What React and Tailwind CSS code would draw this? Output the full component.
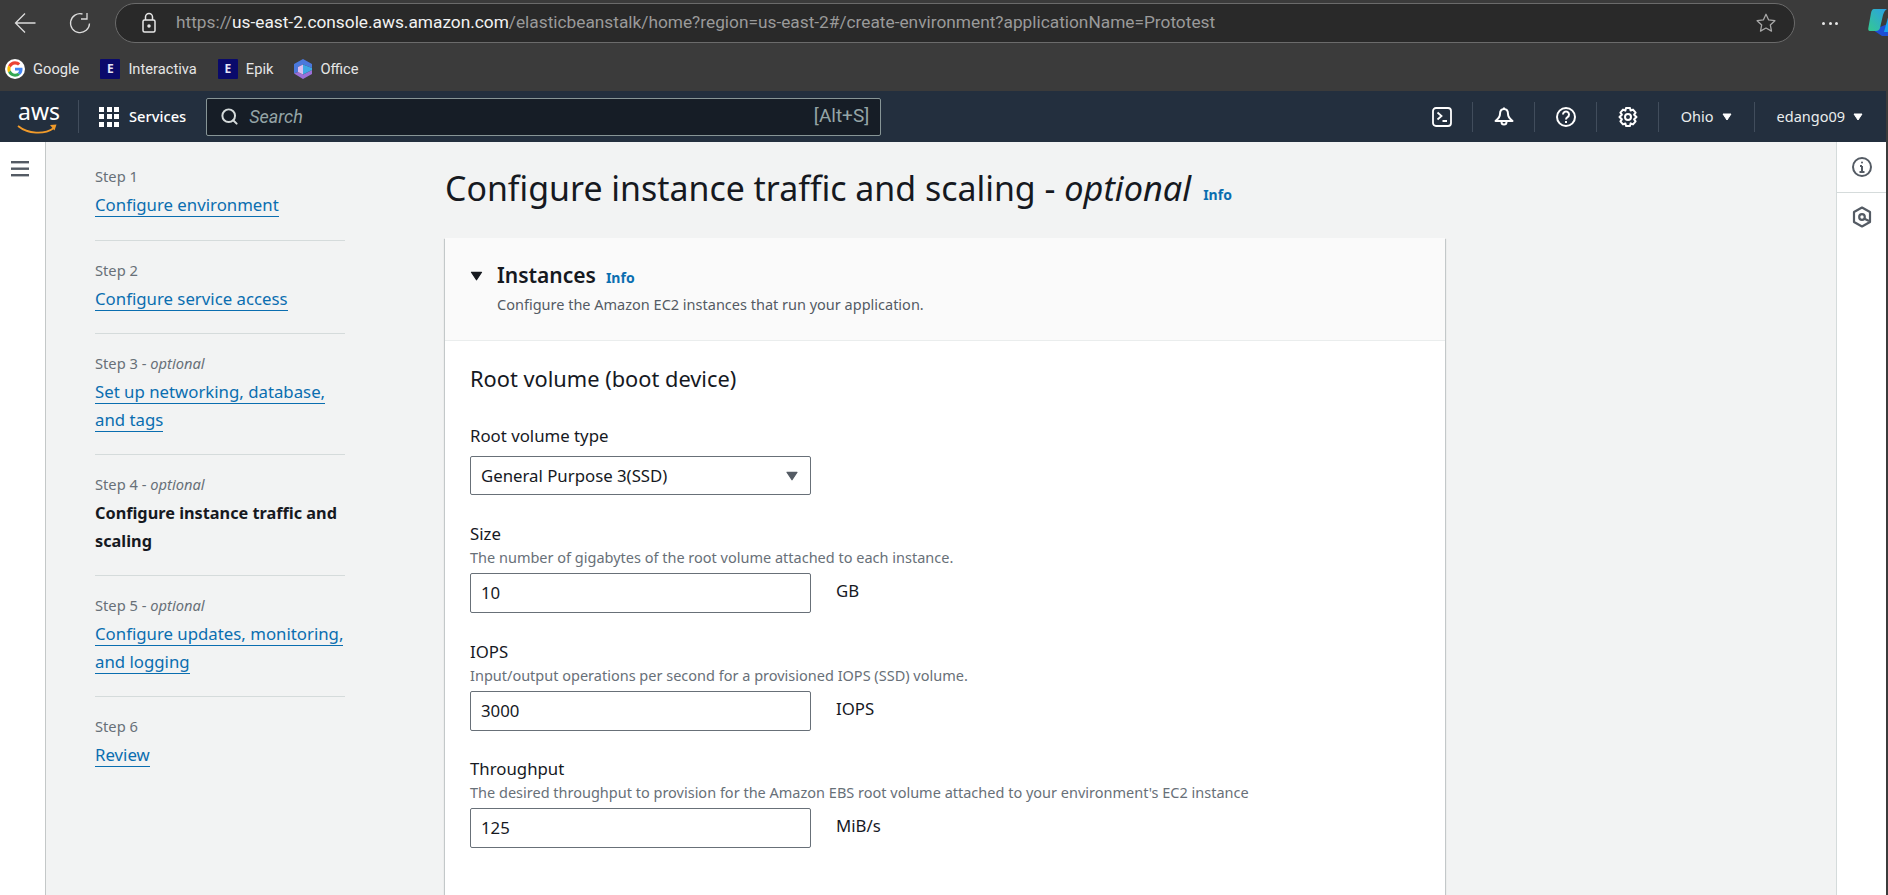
import { Search } from 'lucide-react'

const SANS = 'font-["Noto_Sans",sans-serif]'

const steps = [
  { label: 'Step 1', links: ['Configure environment'] },
  { label: 'Step 2', links: ['Configure service access'] },
  { label: 'Step 3', optional: true, links: ['Set up networking, database,', 'and tags'] },
  { label: 'Step 4', optional: true, current: true, links: ['Configure instance traffic and', 'scaling'] },
  { label: 'Step 5', optional: true, links: ['Configure updates, monitoring,', 'and logging'] },
  { label: 'Step 6', links: ['Review'] },
]

const fields = [
  { label: 'Size', desc: 'The number of gigabytes of the root volume attached to each instance.', value: '10', unit: 'GB' },
  { label: 'IOPS', desc: 'Input/output operations per second for a provisioned IOPS (SSD) volume.', value: '3000', unit: 'IOPS' },
  { label: 'Throughput', desc: "The desired throughput to provision for the Amazon EBS root volume attached to your environment's EC2 instance", value: '125', unit: 'MiB/s' },
]

function Bookmark({ icon, children }) {
  return (
    <div className="flex items-center gap-[8px]">
      {icon}
      <span className="font-['Roboto',sans-serif] text-[14.700px] text-[#e6e6e6]">{children}</span>
    </div>
  )
}

function EpikIcon() {
  return (
    <span className="flex h-5 w-5 items-center justify-center rounded-[1px] bg-[#0a0a6b] text-[12px] leading-none font-bold text-[#e4e4f6]">E</span>
  )
}

function GoogleIcon() {
  return (
    <svg width="20" height="20" viewBox="0 0 48 48">
      <circle cx="24" cy="24" r="24" fill="#fff" />
      <path fill="#ea4335" d="M24 13c2.900 0 5.400 1 7.300 2.800l5.300-5.300C33.400 7.500 29 5.600 24 5.600c-7.200 0-13.400 4.100-16.400 10.100l6.200 4.800C15.300 16.200 19.300 13 24 13z" />
      <path fill="#4285f4" d="M42 24.500c0-1.300-.1-2.500-.3-3.700H24v7h10.100c-.4 2.300-1.800 4.300-3.800 5.600l6 4.600c3.500-3.200 5.700-8 5.700-13.500z" />
      <path fill="#fbbc05" d="M13.800 27.500c-.4-1.100-.6-2.300-.6-3.500s.2-2.400.6-3.500l-6.200-4.800C6.300 18.200 5.600 21 5.600 24s.7 5.800 2 8.300l6.200-4.800z" />
      <path fill="#34a853" d="M24 42.400c5 0 9.200-1.600 12.300-4.500l-6-4.600c-1.700 1.100-3.800 1.800-6.300 1.800-4.700 0-8.700-3.200-10.200-7.500l-6.200 4.800c3 6 9.200 10 16.400 10z" />
    </svg>
  )
}

function OfficeIcon() {
  return (
    <svg width="18" height="20" viewBox="0 0 18 20">
      <path fill="#4a78dc" d="M9 0l9 5v4L9 5.500 4 8v5l-4 1.500V5z" />
      <path fill="#9a6fd8" d="M0 14.500L4 13l5 2.500 9-4.500v4l-9 5z" />
      <path fill="#d9bdf0" d="M4 8l5-2.500v10L4 13z" />
      <path fill="#3fa7e4" d="M9 5.500l9 3.500v2l-9 4.500z" />
    </svg>
  )
}

function NavSep({ className }) {
  return <span className={`h-[30px] w-px bg-[#414d5c] ${className}`} />
}

function Caret({ className }) {
  return (
    <svg className={className} width="10" height="8" viewBox="0 0 10 8">
      <path fill="currentColor" stroke="currentColor" strokeLinejoin="round" d="M1 1h8L5 7z" />
    </svg>
  )
}

export default function App() {
  return (
    <div className={`flex h-[895px] w-[1888px] flex-col overflow-hidden bg-[#3b3b3b] ${SANS}`}>
      {/* browser toolbar */}
      <div className="flex h-[46px] shrink-0 items-center pl-[14px]">
        <svg className="shrink-0" width="22" height="22" viewBox="0 0 22 22" fill="none" stroke="#dcdcdc" strokeWidth="1.300">
          <path d="M21.500 11H2M11 1.500L1.500 11l9.500 9.500" />
        </svg>
        <svg className="ml-[33px] shrink-0" width="22" height="22" viewBox="0 0 22 22" fill="none" stroke="#dcdcdc" strokeWidth="1.300">
          <path d="M13.500 2A9.500 9.500 0 1 0 20.500 11.500" />
          <path d="M18 1v6h-6" />
        </svg>
        <div className="ml-[24px] flex h-[40px] w-[1680px] shrink-0 items-center rounded-full border border-[#6b6b6b] bg-[#292929] pr-[17px] pl-[23px]">
          <svg width="20" height="22" viewBox="0 0 20 22" fill="none" stroke="#e8e8e8" strokeWidth="1.500">
            <rect x="4" y="8" width="12" height="12" rx="1.500" />
            <path d="M6.500 8V5a3.500 3.500 0 0 1 7 0v3" />
            <circle cx="10" cy="14" r="1" fill="#e8e8e8" />
          </svg>
          <div className="ml-[17px] flex-1 font-['Roboto',sans-serif] text-[17.300px] text-[#9a9a9a]">
            https://<span className="text-[#f2f2f2]">us-east-2.console.aws.amazon.com</span>/elasticbeanstalk/home?region=us-east-2#/create-environment?applicationName=Prototest
          </div>
          <svg width="22" height="22" viewBox="0 0 24 24" fill="none" stroke="#a8a8a8" strokeWidth="1.400" strokeLinejoin="round">
            <path d="M12 2.500l2.900 6.200 6.800.8-5 4.600 1.300 6.700-6-3.300-6 3.300 1.300-6.700-5-4.600 6.800-.8z" />
          </svg>
        </div>
        <div className="ml-[27px] flex shrink-0 gap-[3.500px]">
          <span className="h-[3px] w-[3px] rounded-full bg-[#e8e8e8]" />
          <span className="h-[3px] w-[3px] rounded-full bg-[#e8e8e8]" />
          <span className="h-[3px] w-[3px] rounded-full bg-[#e8e8e8]" />
        </div>
        <svg className="ml-[30px] shrink-0" width="24" height="30" viewBox="0 0 24 30">
          <defs>
            <linearGradient id="copilot-a" x1="0" y1="1" x2="1" y2="0">
              <stop offset="0" stopColor="#35c98f" />
              <stop offset="1" stopColor="#2a9fe8" />
            </linearGradient>
          </defs>
          <path fill="#1d4fd6" d="M5 22l9 6h10V14z" />
          <path fill="url(#copilot-a)" d="M6 1h13c-2 1-3 3-4 6l-3 13c-.5 2-2 3-4 3H2c-2 0-2-2-1.500-4L3 5c.5-2.500 1.500-4 3-4z" />
          <path fill="#18a4f0" d="M21 6h3v18h-8z" />
        </svg>
      </div>

      {/* bookmarks */}
      <div className="flex h-[45px] shrink-0 items-center gap-[21px] pt-[1px] pl-[5px]">
        <Bookmark icon={<GoogleIcon />}>Google</Bookmark>
        <Bookmark icon={<EpikIcon />}>Interactiva</Bookmark>
        <Bookmark icon={<EpikIcon />}>Epik</Bookmark>
        <Bookmark icon={<OfficeIcon />}>Office</Bookmark>
      </div>

      {/* page */}
      <div className="mr-[2px] flex min-h-0 flex-1 flex-col">
        <header className="flex h-[51px] shrink-0 items-center bg-[#232f3e] pr-[23px] pl-[17px] text-white">
          <div className="relative h-[36px] w-[40px]">
            <span className="absolute top-[-3px] left-[1px] text-[23px] leading-[30px] text-white">aws</span>
            <svg className="absolute top-[25px] left-0" width="40" height="12" viewBox="0 0 40 12" fill="none">
              <path stroke="#f09a2a" strokeWidth="1.800" d="M1 2c10 8 26 9 36 2" />
              <path fill="#f09a2a" d="M33 1l6.500-.500-2 6z" />
            </svg>
          </div>
          <span className="ml-[21px] h-[33px] w-px bg-[#414d5c]" />
          <div className="ml-[20px] grid grid-cols-3 gap-[2.500px]">
            {Array.from({ length: 9 }).map((_, i) => (
              <span key={i} className="h-[5px] w-[5px] bg-white" />
            ))}
          </div>
          <span className="ml-[10px] text-[14.700px] font-medium">Services</span>
          <div className="ml-[20px] flex h-[38px] w-[675px] items-center rounded-[2px] border border-[#879596] bg-[#161d26] pr-[11px] pl-[13px]">
            <Search size={19} strokeWidth={2.500} className="text-[#d5dbdb]" />
            <span className="ml-[10px] flex-1 font-['Roboto',sans-serif] text-[18px] text-[#95a5a6] italic">Search</span>
            <span className="font-['Roboto',sans-serif] text-[19px] text-[#95a5a6]">[Alt+S]</span>
          </div>
          <div className="flex-1" />
          <svg width="20" height="20" viewBox="0 0 20 20" fill="none" stroke="#fff" strokeWidth="1.800">
            <rect x="1" y="1" width="18" height="18" rx="3" />
            <path d="M5.500 5.500l4 3.500-4 3.500M10.500 14H15" />
          </svg>
          <NavSep className="mx-[20.500px]" />
          <svg width="20" height="20" viewBox="0 0 20 20" fill="none" stroke="#fff" strokeWidth="2" strokeLinejoin="round">
            <path d="M10 2c-3 0-4 2.500-4 5 0 3-2 5-4.500 7h17c-2.500-2-4.500-4-4.500-7 0-2.500-1-5-4-5z" />
            <path d="M10 .500v2" />
            <path d="M7.500 15a2.500 2.500 0 0 0 5 0" />
          </svg>
          <NavSep className="mx-[20.500px]" />
          <svg width="20" height="20" viewBox="0 0 20 20" fill="none" stroke="#fff" strokeWidth="2">
            <circle cx="10" cy="10" r="9" />
            <path d="M7 7.500a3 3 0 1 1 4.500 2.600c-1 .6-1.500 1.200-1.500 2.400M10 14v2" />
          </svg>
          <NavSep className="mx-[20.500px]" />
          <svg width="20" height="20" viewBox="0 0 20 20" fill="none" stroke="#fff" strokeWidth="2" strokeLinejoin="round">
            <path d="M8 1h4l.6 2.600 2.400-1 2.600 3-1.500 2.100L18.500 10l-2.400 2.300 1.500 2.100-2.600 3-2.400-1L12 19H8l-.6-2.600-2.400 1-2.600-3 1.500-2.100L1.500 10l2.400-2.300-1.500-2.100 2.600-3 2.400 1z" />
            <circle cx="10" cy="10" r="3" />
          </svg>
          <NavSep className="mr-[21.500px] ml-[20.500px]" />
          <span className="text-[14.500px] text-[#eaeded]">Ohio</span>
          <Caret className="ml-[8px] text-white" />
          <NavSep className="mx-[22px]" />
          <span className="text-[14.500px] text-[#eaeded]">edango09</span>
          <Caret className="ml-[8px] text-white" />
        </header>

        <div className="flex min-h-0 flex-1 bg-[#f2f3f3]">
          {/* left rail */}
          <div className="w-[46px] shrink-0 border-r border-[#c4c8c8] bg-white pt-[19px] pl-[11px]">
            <svg width="18" height="16" viewBox="0 0 18 16" fill="#545b64">
              <rect y="0" width="18" height="2.400" />
              <rect y="6.500" width="18" height="2.400" />
              <rect y="13" width="18" height="2.400" />
            </svg>
          </div>

          {/* wizard steps */}
          <nav className="ml-[49px] w-[250px] shrink-0 pt-[25px]">
            {steps.map((step, i) => (
              <div
                key={step.label}
                className={
                  i === 0
                    ? 'mb-[20px] border-b border-[#d5dbdb] pb-[21px]'
                    : i < steps.length - 1
                      ? 'mb-[20px] border-b border-[#d5dbdb] pb-[20px]'
                      : ''
                }
              >
                <div className="mb-[4px] h-[20px] text-[14.700px] leading-[18px] text-[#687078]">
                  {step.label}
                  {step.optional && <> - <span className="italic">optional</span></>}
                </div>
                {step.links.map((line) => (
                  <div key={line} className="h-[28px] leading-[28px] whitespace-nowrap">
                    {step.current ? (
                      <span className="text-[16.300px] font-bold text-[#16191f]">{line}</span>
                    ) : (
                      <span className="border-b border-[#0a6eb0] text-[16.800px] text-[#0a6eb0]">{line}</span>
                    )}
                  </div>
                ))}
              </div>
            ))}
          </nav>

          {/* main column */}
          <main className="ml-[100px] w-[1000px] shrink-0">
            <div className="flex h-[96px] items-center pb-[4px]">
              <h1 className="text-[33.900px] leading-[44px] font-normal text-[#16191f]">
                Configure instance traffic and scaling - <span className="text-[34.300px] italic">optional</span>
              </h1>
              <span className="mt-[12px] ml-[12px] text-[14px] font-bold text-[#0a6eb0]">Info</span>
            </div>

            <section className="h-[800px] bg-white shadow-[0_1px_1px_0_rgba(0,28,36,0.3),1px_1px_1px_0_rgba(0,28,36,0.15),-1px_1px_1px_0_rgba(0,28,36,0.15)]">
              <div className="flex h-[103px] border-b border-[#eaeded] bg-[#fafafa] pt-[23px] pl-[25px]">
                <Caret className="mt-[10px] h-[10px] w-[13px] text-[#16191f]" />
                <div className="ml-[14px]">
                  <div className="flex items-baseline">
                    <h2 className="text-[21px] leading-[28px] font-semibold text-[#16191f]">Instances</h2>
                    <span className="ml-[10px] text-[14px] font-bold text-[#0a6eb0]">Info</span>
                  </div>
                  <p className="mt-[3px] text-[14.500px] leading-[24px] text-[#545b64]">Configure the Amazon EC2 instances that run your application.</p>
                </div>
              </div>

              <div className="pt-[24px] pl-[25px]">
                <h3 className="text-[21.800px] leading-[28px] font-normal text-[#16191f]">Root volume (boot device)</h3>
                <label className="mt-[31px] block h-[24px] text-[16.800px] leading-[24px] text-[#16191f]">Root volume type</label>
                <div className="mt-[8px] flex h-[39px] w-[341px] items-center justify-between rounded-[2px] border border-[#687078] pr-[11px] pl-[10px] text-[16.800px] text-[#16191f]">
                  General Purpose 3(SSD)
                  <Caret className="h-[10px] w-[14px] text-[#545b64]" />
                </div>

                {fields.map((f, i) => (
                  <div key={f.label} className={i === 2 ? 'mt-[25px]' : 'mt-[26px]'}>
                    <div className="h-[24px] text-[16.800px] leading-[26px] text-[#16191f]">{f.label}</div>
                    <div className="mt-[3px] h-[20px] text-[14.500px] leading-[18px] whitespace-nowrap text-[#687078]">{f.desc}</div>
                    <div className="mt-[5px] flex">
                      <div className="flex h-[40px] w-[341px] items-center rounded-[2px] border border-[#687078] bg-white pl-[10px] text-[16.800px] text-[#16191f]">{f.value}</div>
                      <span className="mt-[6px] ml-[25px] text-[16.800px] leading-[24px] text-[#16191f]">{f.unit}</span>
                    </div>
                  </div>
                ))}
              </div>
            </section>
          </main>

          <div className="flex-1" />

          {/* right rail */}
          <div className="w-[50px] shrink-0 border-l border-[#d5dbdb] bg-white">
            <div className="flex h-[51px] items-center justify-center border-b border-[#d5dbdb]">
              <svg width="20" height="20" viewBox="0 0 20 20" fill="none" stroke="#545b64" strokeWidth="2">
                <circle cx="10" cy="10" r="9" />
                <path d="M10 9v6M7.500 15h5M8 9h2" />
                <circle cx="10" cy="5.500" r="1" fill="#545b64" stroke="none" />
              </svg>
            </div>
            <div className="flex h-[50px] items-center justify-center pb-[2px]">
              <svg width="20" height="22" viewBox="0 0 20 22" fill="none" stroke="#545b64" strokeWidth="2.200" strokeLinejoin="round">
                <path d="M10 1.500l8 4.500v10l-8 4.500L2 16V6z" />
                <circle cx="10" cy="11" r="2.800" />
                <path d="M12 12.500l5 2.500" />
              </svg>
            </div>
          </div>
        </div>
      </div>
    </div>
  )
}
